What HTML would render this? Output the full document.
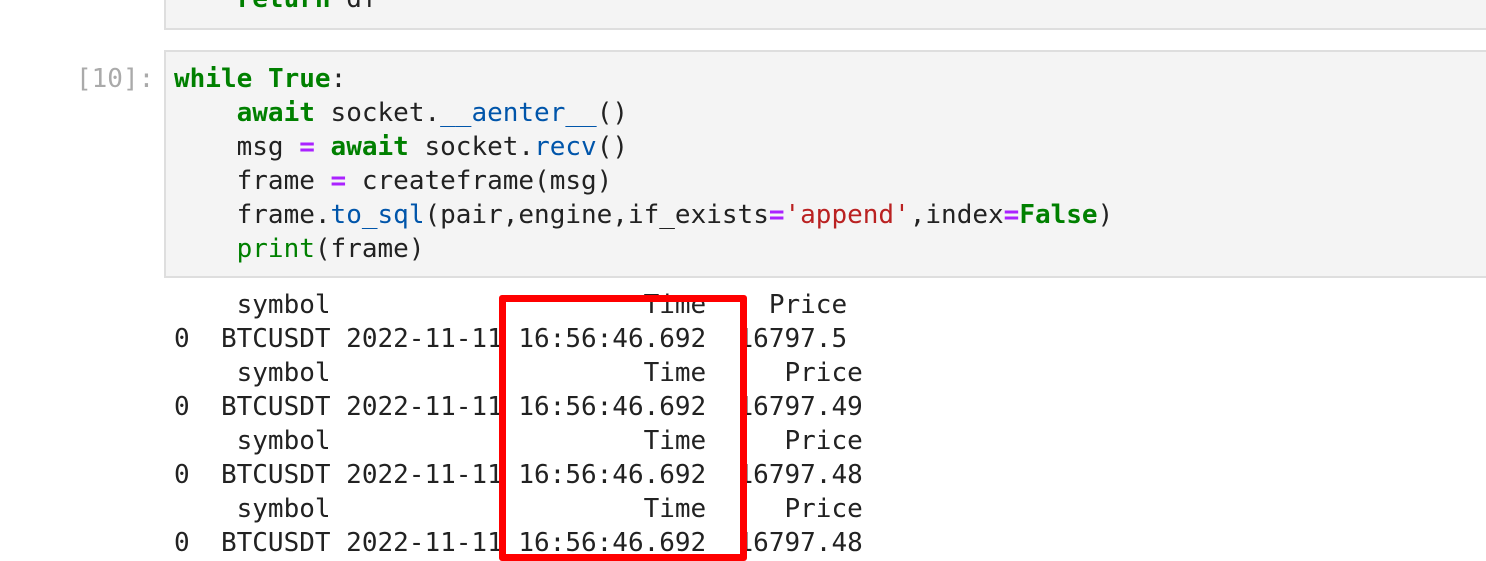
<!DOCTYPE html>
<html><head><style>
body{margin:0;width:1486px;height:560px;overflow:hidden;background:#fff;position:relative;font-family:"DejaVu Sans Mono","Liberation Mono",monospace;font-size:26px;}
.cell{position:absolute;left:164px;right:-4px;background:#f4f4f4;border:2px solid #dedede;box-sizing:border-box;}
pre{margin:0;font-family:inherit;font-size:26px;line-height:34px;color:#222;position:absolute;white-space:pre;}
.k{color:#008000;font-weight:bold}
.o{color:#aa22ff;font-weight:bold}
.f{color:#0055aa}
.s{color:#ba2121}
.b{color:#008000}
</style></head><body>
<div class="cell" style="top:-10px;height:40px"></div>
<pre style="left:174px;top:-18px">    <span class="k">return</span> df</pre>
<div class="cell" style="top:50px;height:228px"></div>
<pre style="left:76px;top:62px;color:#aaa">[10]:</pre>
<pre style="left:174px;top:62px"><span class="k">while</span> <span class="k">True</span>:
    <span class="k">await</span> socket<span>.</span><span class="f">__aenter__</span>()
    msg <span class="o">=</span> <span class="k">await</span> socket.<span class="f">recv</span>()
    frame <span class="o">=</span> createframe(msg)
    frame.<span class="f">to_sql</span>(pair,engine,if_exists<span class="o">=</span><span class="s">'append'</span>,index<span class="o">=</span><span class="k">False</span>)
    <span class="b">print</span>(frame)</pre>
<pre style="left:174px;top:288px">    symbol                    Time    Price
0  BTCUSDT 2022-11-11 16:56:46.692  16797.5
    symbol                    Time     Price
0  BTCUSDT 2022-11-11 16:56:46.692  16797.49
    symbol                    Time     Price
0  BTCUSDT 2022-11-11 16:56:46.692  16797.48
    symbol                    Time     Price
0  BTCUSDT 2022-11-11 16:56:46.692  16797.48</pre>
<div style="position:absolute;left:499px;top:295px;width:248px;height:266px;border:7px solid #ff0000;border-radius:3px;box-sizing:border-box"></div>
</body></html>
